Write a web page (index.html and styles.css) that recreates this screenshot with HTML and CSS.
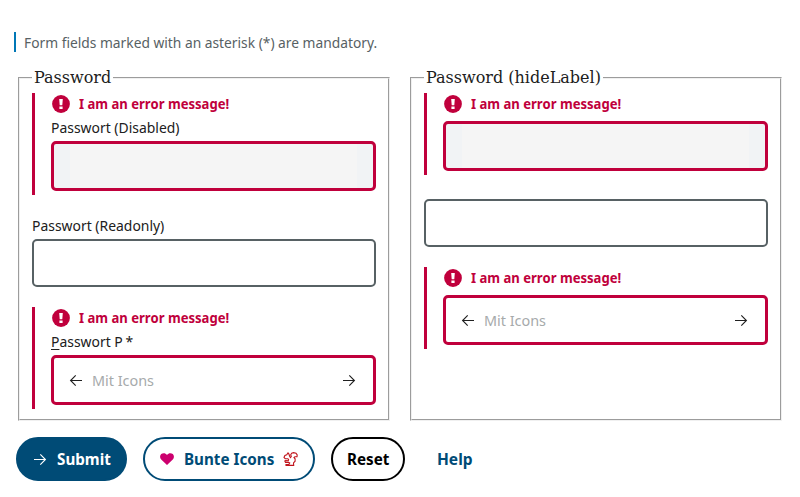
FILE: index.html
```html
<!DOCTYPE html>
<html lang="de">
<head>
<meta charset="utf-8">
<title>Password</title>
<link rel="stylesheet" href="styles.css">
</head>
<body>
<svg class="defs" aria-hidden="true">
  <symbol id="alert" viewBox="0 0 18 18"><circle cx="9" cy="9" r="8.9" fill="currentColor"/><path d="M7.2 4h3.6l-.5 6.200H7.700zM7.400 11.500h3.200v2.500H7.400z" fill="#fff"/></symbol>
  <symbol id="right" viewBox="0 0 14 12"><path d="M1 6.5H12.4M7.3 1.4 12.4 6.5 7.3 11.6" fill="none" stroke="currentColor" stroke-width="1.15"/></symbol>
  <symbol id="left" viewBox="0 0 14 12"><path d="M13 6.5H1.6M6.7 1.4 1.6 6.5 6.7 11.6" fill="none" stroke="currentColor" stroke-width="1.15"/></symbol>
</svg>
<p class="notice"><span class="t t-notice">Form fields marked with an asterisk (*) are mandatory.</span></p>
<form>
  <div class="columns">
    <fieldset>
      <legend>Password</legend>
      <div class="field error">
        <div class="message"><svg><use href="#alert"/></svg><span class="t t-error">I am an error message!</span></div>
        <label><span class="t">Passwort (Disabled)</span></label>
        <div class="box disabled"><span class="fill"></span></div>
      </div>
      <div class="field">
        <label><span class="t">Passwort (Readonly)</span></label>
        <div class="box"></div>
      </div>
      <div class="field error">
        <div class="message"><svg><use href="#alert"/></svg><span class="t t-error">I am an error message!</span></div>
        <label><span class="t"><u>P</u>asswort P<span class="star">*</span></span></label>
        <div class="box"><svg class="arrow"><use href="#left"/></svg><span class="t placeholder">Mit Icons</span><svg class="arrow end"><use href="#right"/></svg></div>
      </div>
    </fieldset>
    <fieldset>
      <legend>Password (hideLabel)</legend>
      <div class="field error">
        <div class="message"><svg><use href="#alert"/></svg><span class="t t-error">I am an error message!</span></div>
        <div class="box disabled"><span class="fill"></span></div>
      </div>
      <div class="field bare">
        <div class="box"></div>
      </div>
      <div class="field error">
        <div class="message"><svg><use href="#alert"/></svg><span class="t t-error">I am an error message!</span></div>
        <div class="box"><svg class="arrow"><use href="#left"/></svg><span class="t placeholder">Mit Icons</span><svg class="arrow end"><use href="#right"/></svg></div>
      </div>
    </fieldset>
  </div>
  <div class="actions">
    <button type="button" class="submit"><svg class="arrow"><use href="#right"/></svg><span class="t">Submit</span></button>
    <button type="button" class="bunte">
      <svg class="heart" viewBox="0 0 14 12"><path d="M7 12 1.2 6.5C-.4 4.8-.2 2.3 1.2 1.1 3-.5 5.600 0 7 1.900 8.400 0 11-.5 12.800 1.100 14.200 2.300 14.400 4.800 12.800 6.500z" fill="#cc006e"/></svg>
      <span class="t">Bunte Icons</span>
      <svg class="squirrel" viewBox="0 0 14 14"><path d="M4.500 .9 5.400 2 6.200 4.500 7 5.500 7.800 4.500 7.200 2.800 8.200 1.100 10 .6 12.500 1.200 13.700 3 13.500 4.800 11.400 4.800 10.500 5.500 11.600 6.800 11.600 9.200 10 11 10.200 13.400H2.500V12.500L5.500 12.200 6.200 11 5 10.400H2L1.300 9 2.200 8.500 4.800 8.700 5.100 7.500 4.300 6.700 1.700 6.700 .5 5.400 1.400 3.500 3.200 2.700z" fill="none" stroke="#c0141c" stroke-width="1.1"/></svg>
    </button>
    <button type="button" class="reset"><span class="t">Reset</span></button>
    <button type="button" class="help"><span class="t">Help</span></button>
  </div>
</form>
</body>
</html>
```
FILE: styles.css
```css
* { box-sizing: border-box; }
body { margin: 0; padding: 32px 18px 0; background: #fff; color: #202020; font: 15px/20px "Noto Sans", sans-serif; }
.defs { position: absolute; width: 0; height: 0; }
.t { display: inline-block; white-space: nowrap; transform: scaleX(.928); transform-origin: left center; }
.t-notice { transform: scaleX(.919); }
.t-error { transform: scaleX(.872); }
.notice { height: 20px; margin: 0 0 16px -4px; padding-left: 8px; border-left: 2px solid #0077b6; color: #576164; }
.columns { display: grid; grid-template-columns: 372px 372px; gap: 20px; }
fieldset { margin: 0; padding: 5.600px 12px 10px; border: 2px groove #f0f0f0; height: 353px; min-width: 0; }
legend { padding: 0 2px; font: 16px/19px "DejaVu Serif", serif; }
.field { margin-bottom: 20px; }
.field.error { padding: 0 0 4px 16px; border-left: 3px solid #c0003c; }
.field.error + .field { margin-top: 20px; }
.field.error + .bare { margin-top: 24px; }
.message { display: flex; align-items: center; gap: 9px; height: 22px; padding-left: 1px; color: #c0003c; font-weight: 700; }
.message svg { width: 18px; height: 18px; }
.message .t { padding-bottom: 2px; }
label { display: block; height: 24px; line-height: 20px; }
.error label { height: 26px; line-height: 24px; }
.message + .box { margin-top: 6px; }
.star { margin-left: 3px; }
u { text-underline-offset: 2px; }
.box { display: flex; align-items: center; height: 48px; padding: 0 17px; border: 2px solid #576164; border-radius: 5px; }
.error .box { height: 50px; padding: 0 15px 0 15px; border: 3px solid #c0003c; }
.error .disabled { padding: 0 16px; background: #f1f3f5; }
.fill { flex: 1; height: 44px; background: #f5f5f5; }
.arrow { width: 14px; height: 12px; flex: none; }
.end { margin-left: auto; margin-right: 2px; }
.placeholder { margin-left: 9px; color: #a6aaab; transform: scaleX(.96); }
.actions { display: flex; gap: 16px; margin: 16px 0 0 -2px; }
button { display: flex; align-items: center; height: 44px; margin: 0; padding: 0 14px; border: 2px solid #004b76; border-radius: 22px; background: #fff; color: #004b76; font: 700 16px/24px "Noto Sans", sans-serif; }
button .t { transform: scaleX(.95); }
.submit { width: 111px; padding-left: 15px; background: #004b76; color: #fff; gap: 10px; }
.bunte { width: 172px; padding-left: 15px; padding-right: 0; }
.heart { width: 14px; height: 12px; margin-right: 10px; flex: none; }
.squirrel { width: 15px; height: 14px; flex: none; margin: 0 15px 0 auto; }
.reset { width: 74px; border-color: #000; color: #000; }
.help { width: 68px; border-color: transparent; }
.help .t { transform: scaleX(.97); }
```
